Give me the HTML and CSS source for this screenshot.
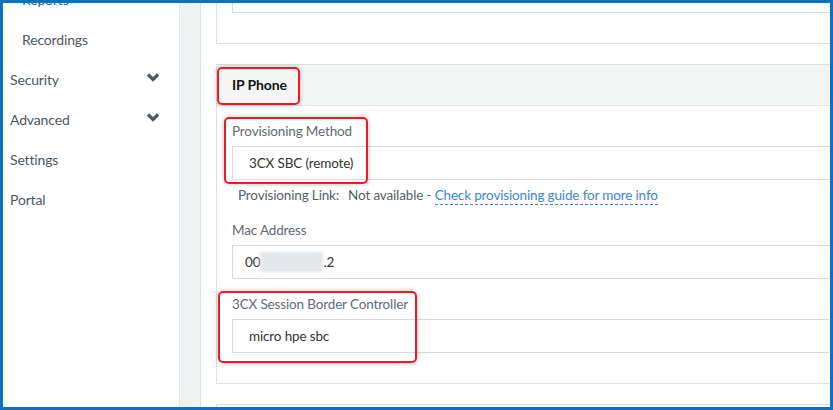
FILE: index.html
```html
<!DOCTYPE html>
<html>
<head>
<meta charset="utf-8">
<link rel="stylesheet" href="styles.css">
</head>
<body>
<div class="frame">
  <nav class="sidebar">
    <ul class="menu">
      <li class="item sub">Reports</li>
      <li class="item sub">Recordings</li>
      <li class="item">Security
        <svg class="chev" width="14" height="11" viewBox="0 0 14 11"><polyline points="2,2.5 7,7.5 12,2.5" fill="none" stroke="#4d5864" stroke-width="3.2"/></svg>
      </li>
      <li class="item">Advanced
        <svg class="chev" width="14" height="11" viewBox="0 0 14 11"><polyline points="2,2.5 7,7.5 12,2.5" fill="none" stroke="#4d5864" stroke-width="3.2"/></svg>
      </li>
      <li class="item">Settings</li>
      <li class="item">Portal</li>
    </ul>
  </nav>
  <div class="gutter"></div>
  <main class="main">
    <section class="panel first">
      <div class="panel-body">
        <div class="input"></div>
      </div>
    </section>

    <section class="panel ip">
      <div class="panel-head">IP Phone</div>
      <div class="panel-body">
        <div class="label">Provisioning Method</div>
        <div class="input"><span class="val">3CX SBC (remote)</span></div>
        <div class="prov-link"><span class="pl-key">Provisioning Link:</span><span>Not available - </span><a class="link">Check provisioning guide for more info</a></div>
        <div class="label gap">Mac Address</div>
        <div class="input mac"><span class="val">00<span class="blur"></span>.2</span></div>
        <div class="label gap">3CX Session Border Controller</div>
        <div class="input"><span class="val">micro hpe sbc</span></div>
      </div>
      <div class="hl hl-head"></div>
      <div class="hl hl-prov"></div>
      <div class="hl hl-sbc"></div>
    </section>

    <section class="panel last"></section>
  </main>
</div>
</body>
</html>
```

FILE: styles.css
```css
* { box-sizing: border-box; }
html, body { margin: 0; padding: 0; }
body {
  font-family: "Source Sans Pro", Lato, "Liberation Sans", sans-serif;
  font-size: 13.5px;
  letter-spacing: -0.15px;
  color: #333;
  background: #fff;
}
.frame {
  width: 833px;
  height: 410px;
  border: 3px solid #0a72c1;
  display: flex;
  overflow: hidden;
  background: #fff;
}
.sidebar {
  width: 177px;
  flex: none;
  border-right: 1px solid #dfe5e8;
  background: #fff;
}
.menu {
  list-style: none;
  margin: -23px 0 0 0;
  padding: 0;
}
.item {
  height: 40px;
  line-height: 40px;
  padding-left: 7px;
  color: #4c5662;
  display: flex;
  align-items: center;
  position: relative;
  font-size: 14px;
}
.item.sub { padding-left: 19px; }
.chev {
  position: absolute;
  left: 143px;
  top: 12px;
}
.gutter {
  width: 21px;
  flex: none;
  background: #eef2f3;
  border-right: 1px solid #d9e1e4;
}
.main {
  flex: 1;
  padding-left: 15px;
  overflow: hidden;
  background: #fff;
}
.panel {
  border: 1px solid #d8e1e3;
  margin-right: -60px;
  position: relative;
}
.panel.first { margin-top: -40px; }
.panel.ip { margin-top: 20px; }
.panel.last { margin-top: 20px; height: 40px; }
.panel-head {
  height: 41px;
  background: #f4f6f6;
  border-bottom: 1px solid #e1e7e8;
  padding-left: 15px;
  line-height: 40px;
  font-weight: bold;
  font-size: 14px;
  letter-spacing: -0.1px;
  color: #111;
}
.panel-body {
  padding: 15px 15px 30px 15px;
}
.label {
  line-height: 20px;
  color: #5f6a75;
  margin-bottom: 5px;
}
.label.gap { margin-top: 15px; }
.input {
  height: 34px;
  border: 1px solid #d3dcdf;
  line-height: 32px;
  padding-left: 16px;
  color: #333;
}
.input.mac { padding-left: 12px; }
.blur {
  display: inline-block;
  width: 63px;
  height: 20px;
  vertical-align: middle;
  background: #e5e8eb;
  filter: blur(1px);
  margin-top: -3px;
}
.prov-link {
  margin-top: 5px;
  padding-left: 6px;
  line-height: 20px;
  color: #555e68;
}
.pl-key { margin-right: 9px; }
.link {
  color: #3a87d3;
  border-bottom: 1px dashed #3a87d3;
  padding-bottom: 1px;
}
.hl {
  position: absolute;
  border: 2px solid #ec1a22;
  border-radius: 5px;
  box-shadow: 0 0 5px rgba(0,0,0,0.25);
  pointer-events: none;
}
.hl-head { left: 0; top: 2px; width: 83px; height: 38px; }
.hl-prov { left: 7px; top: 52px; width: 144px; height: 67px; }
.hl-sbc { left: 1px; top: 226px; width: 199px; height: 72px; }
```
